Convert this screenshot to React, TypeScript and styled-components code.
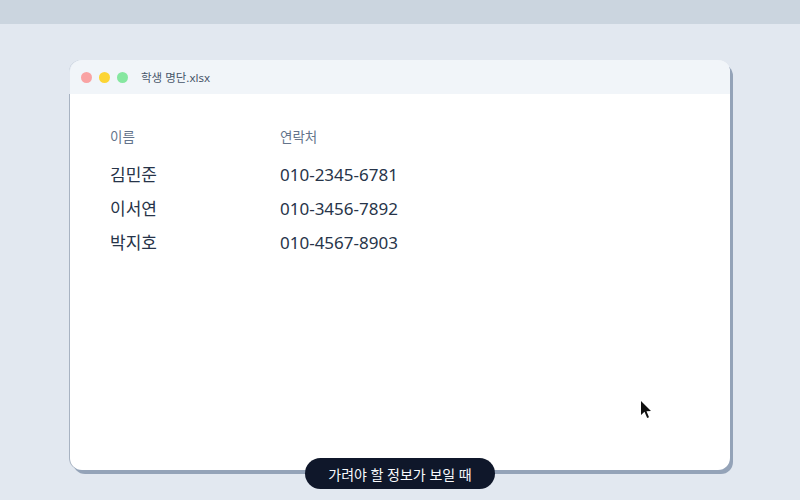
import React from 'react';
import styled, { createGlobalStyle } from 'styled-components';

const GlobalStyle = createGlobalStyle`
  html, body {
    margin: 0;
    padding: 0;
    background: #e2e8f0;
    font-family: "Noto Sans", "Noto Sans CJK KR", sans-serif;
  }
`;

const Page = styled.div`
  width: 800px;
  height: 500px;
  position: relative;
  overflow: hidden;
  background: #e2e8f0;
`;

const TopStrip = styled.div`
  height: 24px;
  background: #cbd5df;
`;

const Window = styled.div`
  position: relative;
  margin: 36px 0 0 70px;
  width: 660px;
  height: 410px;
  background: #ffffff;
  border-radius: 12px;
  box-shadow: 3px 4px 0 #94a3b8, -1px 0 0 #a8b3c2;
  display: flex;
  flex-direction: column;
`;

const TitleBar = styled.div`
  height: 34px;
  background: #f1f5f9;
  border-radius: 12px 12px 0 0;
  display: flex;
  align-items: center;
  padding-left: 11px;
  gap: 7px;
  box-shadow: -1px 0 0 #e2e8f0;
`;

const Dot = styled.span<{ $color: string }>`
  width: 11px;
  height: 11px;
  border-radius: 50%;
  background: ${p => p.$color};
`;

const FileName = styled.span`
  margin-left: 6px;
  font-size: 11.5px;
  color: #475569;
`;

const Sheet = styled.div`
  padding: 33px 0 0 40px;
  display: grid;
  grid-template-columns: 170px 1fr;
  row-gap: 9px;
`;

const HeadCell = styled.div`
  font-size: 13.5px;
  line-height: 20px;
  color: #64748b;
  margin-bottom: 6px;
`;

const Cell = styled.div`
  font-size: 17px;
  line-height: 25px;
  color: #273449;
`;

const Badge = styled.div`
  position: absolute;
  left: 305px;
  top: 458px;
  width: 190px;
  height: 31px;
  border-radius: 16px;
  background: #0f172a;
  color: #f8fafc;
  font-size: 14px;
  display: flex;
  align-items: center;
  justify-content: center;
`;

const Cursor = styled.svg`
  position: absolute;
  left: 640px;
  top: 401px;
`;

const rows = [
  ['김민준', '010-2345-6781'],
  ['이서연', '010-3456-7892'],
  ['박지호', '010-4567-8903'],
];

export default function App() {
  return (
    <Page>
      <GlobalStyle />
      <TopStrip />
      <Window>
        <TitleBar>
          <Dot $color="#f9a3a3" />
          <Dot $color="#fcd535" />
          <Dot $color="#86e7a0" />
          <FileName>학생 명단.xlsx</FileName>
        </TitleBar>
        <Sheet>
          <HeadCell>이름</HeadCell>
          <HeadCell>연락처</HeadCell>
          {rows.map(([name, phone]) => (
            <React.Fragment key={name}>
              <Cell>{name}</Cell>
              <Cell>{phone}</Cell>
            </React.Fragment>
          ))}
        </Sheet>
      </Window>
      <Cursor width="14" height="20" viewBox="0 0 14 20">
        <path d="M1 0 L1 14 L4.5 10.8 L7.2 17 L9 16.2 L6.5 10.2 L11 10 Z" fill="#111" />
      </Cursor>
      <Badge>가려야 할 정보가 보일 때</Badge>
    </Page>
  );
}
